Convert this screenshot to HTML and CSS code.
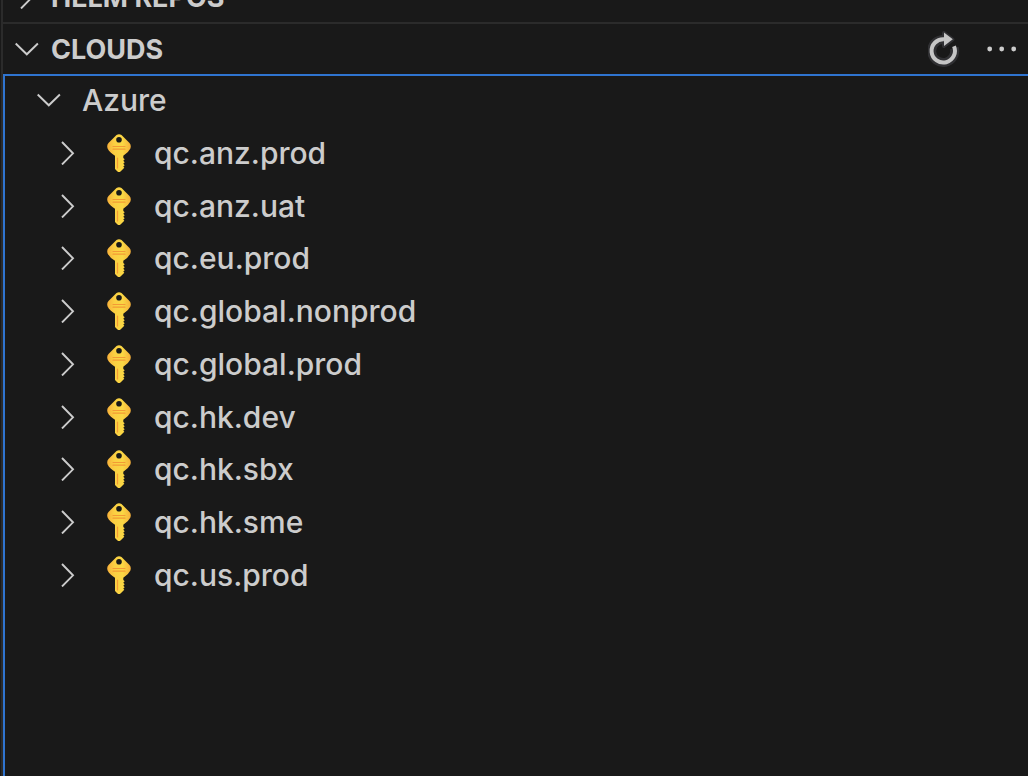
FILE: index.html
```html
<!DOCTYPE html>
<html lang="en">
<head>
<meta charset="utf-8">
<meta name="viewport" content="width=device-width, initial-scale=1">
<title>Clouds</title>
<link rel="stylesheet" href="styles.css">
</head>
<body>
<svg width="0" height="0" class="defs" aria-hidden="true">
  <defs>
    <linearGradient id="gold" x1="0" y1="0" x2="1" y2="0">
      <stop offset="0" stop-color="#f7b03a"/>
      <stop offset="0.3" stop-color="#fbcf42"/>
      <stop offset="0.65" stop-color="#fad744"/>
      <stop offset="1" stop-color="#f6b03a"/>
    </linearGradient>
    <symbol id="down" viewBox="0 0 24 24"><path d="M.7 6.500 11.800 17.300 22.900 6.500" fill="none" stroke="currentColor" stroke-width="1.900"/></symbol>
    <symbol id="right" viewBox="0 0 24 24"><path d="M6 1 17 12.300 6 23.500" fill="none" stroke="currentColor" stroke-width="1.900"/></symbol>
    <symbol id="key" viewBox="0 0 24 38">
      <path fill="url(#gold)" fill-rule="evenodd" d="M9.500 1Q12 -.7 14.500 1L22.500 9Q24.500 11.200 23.400 14.500Q21.500 18.500 16.300 21.800V24L17.700 25.200 16.300 26.700 17.700 28.200 16.300 29.700 17.700 31.200 16.300 32.500 17.300 33.800 13.500 37.500Q12 38.500 10.500 37.500L8 35V21.800Q2.500 18.500 .6 14.500Q-.5 11.200 1.500 9ZM12 3A2.800 2.800 0 1 0 12 8.600A2.800 2.800 0 1 0 12 3Z"/>
      <path d="M6 12.500H18M6 15.200H18M10.500 24V34" fill="none" stroke="#f39a35" stroke-width="1.200" stroke-linecap="round"/>
    </symbol>
  </defs>
</svg>
<main class="sidebar">
  <section class="pane clipped">
    <header class="pane-header">
      <button class="toggle" type="button" aria-expanded="false"><svg class="chevron"><use href="#right"/></svg>HELM REPOS</button>
    </header>
  </section>
  <section class="pane open">
    <header class="pane-header">
      <button class="toggle" type="button" aria-expanded="true"><svg class="chevron"><use href="#down"/></svg>CLOUDS</button>
      <button class="action" type="button" aria-label="Refresh">
        <svg width="32" height="38" viewBox="1 1 32 38">
          <g stroke="#303033" stroke-width="4" stroke-linejoin="round">
            <path d="M16 10.500A11.500 11.500 0 1 0 27.300 19" fill="none" stroke-width="9"/>
            <path d="M17 4 25.500 10.500 17 17Z" fill="#303033"/>
          </g>
          <path d="M17 10.200A11.700 11.700 0 1 0 27 17.200" fill="none" stroke="#c5c5c5" stroke-width="4"/>
          <path d="M17 3.500 25.800 10.300 17 17Z" fill="#c5c5c5"/>
        </svg>
      </button>
      <button class="action" type="button" aria-label="More actions">
        <svg width="32" height="38" viewBox="0 0 32 38" fill="#cccccc"><circle cx="3.700" cy="19" r="2.400"/><circle cx="15.700" cy="19" r="2.400"/><circle cx="27.700" cy="19" r="2.400"/></svg>
      </button>
    </header>
    <div class="tree">
      <div class="rows">
        <button class="row root" type="button" aria-expanded="true"><svg class="chevron"><use href="#down"/></svg>Azure</button>
        <button class="row" type="button" aria-expanded="false"><svg class="chevron"><use href="#right"/></svg><svg class="key"><use href="#key"/></svg>qc.anz.prod</button>
        <button class="row" type="button" aria-expanded="false"><svg class="chevron"><use href="#right"/></svg><svg class="key"><use href="#key"/></svg>qc.anz.uat</button>
        <button class="row" type="button" aria-expanded="false"><svg class="chevron"><use href="#right"/></svg><svg class="key"><use href="#key"/></svg>qc.eu.prod</button>
        <button class="row" type="button" aria-expanded="false"><svg class="chevron"><use href="#right"/></svg><svg class="key"><use href="#key"/></svg>qc.global.nonprod</button>
        <button class="row" type="button" aria-expanded="false"><svg class="chevron"><use href="#right"/></svg><svg class="key"><use href="#key"/></svg>qc.global.prod</button>
        <button class="row" type="button" aria-expanded="false"><svg class="chevron"><use href="#right"/></svg><svg class="key"><use href="#key"/></svg>qc.hk.dev</button>
        <button class="row" type="button" aria-expanded="false"><svg class="chevron"><use href="#right"/></svg><svg class="key"><use href="#key"/></svg>qc.hk.sbx</button>
        <button class="row" type="button" aria-expanded="false"><svg class="chevron"><use href="#right"/></svg><svg class="key"><use href="#key"/></svg>qc.hk.sme</button>
        <button class="row" type="button" aria-expanded="false"><svg class="chevron"><use href="#right"/></svg><svg class="key"><use href="#key"/></svg>qc.us.prod</button>
      </div>
    </div>
  </section>
</main>
</body>
</html>
```

FILE: styles.css
```css
* {
  box-sizing: border-box;
}

body {
  margin: 0;
  background: #191919;
  color: #cccccc;
  font-family: Inter, "Liberation Sans", sans-serif;
}

.defs {
  position: absolute;
}

button {
  padding: 0;
  border: 0;
  background: none;
  color: inherit;
  font: inherit;
  text-align: left;
}

svg {
  flex: none;
}

.sidebar {
  display: flex;
  flex-direction: column;
  min-height: 100vh;
  margin-left: 1px;
  border-left: 2px solid #2b2b2b;
}

.pane.clipped {
  display: flex;
  align-items: flex-end;
  height: 22px;
  overflow: hidden;
}

.pane.open {
  display: flex;
  flex: 1;
  flex-direction: column;
  border-top: 2px solid #2b2b2b;
}

.pane-header {
  display: flex;
  flex: none;
  align-items: center;
  gap: 26px;
  height: 50px;
  padding: 0 10px 0 12px;
}

.toggle {
  display: flex;
  flex: 1;
  align-items: center;
  gap: 12px;
  font-size: 27px;
  font-weight: 700;
}

.action {
  display: flex;
}

.chevron {
  width: 24px;
  height: 24px;
}

.tree {
  flex: 1;
  box-shadow: inset 2px 2px #2f74d0;
}

.rows {
  display: grid;
  grid-auto-rows: 1fr;
  min-height: 527px;
}

.row {
  display: flex;
  align-items: center;
  padding-left: 53px;
  font-size: 30px;
  font-weight: 500;
}

.row.root {
  gap: 21px;
  padding-left: 34px;
}

.key {
  width: 24px;
  height: 38px;
  margin: 0 23px 0 27px;
}
```
